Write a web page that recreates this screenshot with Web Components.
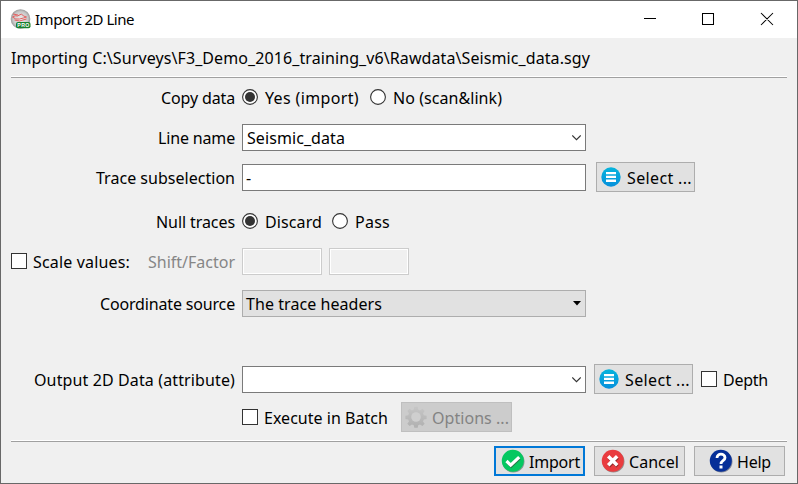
<!DOCTYPE html>
<html lang="en"><head><meta charset="utf-8"><title>Import 2D Line</title>
<style>html,body{margin:0;padding:0;overflow:hidden}body{width:798px;height:484px;font:16px/20px "Noto Sans","DejaVu Sans",sans-serif;color:#000}</style></head><body>
<import-dialog></import-dialog>
<script>
const define=(name,html,init)=>customElements.define(name,class extends HTMLElement{
 connectedCallback(){ if(this.shadowRoot)return; const r=this.attachShadow({mode:'open'});
  r.innerHTML=typeof html==='function'?html(this):html; if(init)init(this,r);}
});
/* Text run whose tracking is adjusted to a given width */
define('fit-text',e=>`<style>:host{display:inline-block;flex:none;white-space:nowrap;width:${e.getAttribute('w')}px}span{display:inline-block;white-space:pre}</style><span></span>`,(e,r)=>{
 const s=r.querySelector('span'),t=e.getAttribute('text'),w=+e.getAttribute('w');s.textContent=t;
 const n=s.getBoundingClientRect().width; if(n&&t.length>1)s.style.letterSpacing=((w-n)/t.length)+'px';
});
const icons={
list:`<svg width="20" height="20" viewBox="0 0 20 20"><defs><linearGradient id="b" x2="0" y2="1"><stop stop-color="#06b4dc"/><stop offset="1" stop-color="#0790dc"/></linearGradient></defs><circle cx="10" cy="10" r="9.7" fill="url(#b)"/><path d="M5 5h10v2.3H5zM5 8.8h10v2.3H5zM5 12.6h10v2.3H5z" fill="#fff"/></svg>`,
gear:`<svg width="22" height="22" viewBox="0 0 22 22"><defs><linearGradient id="m" x2="0" y2="1"><stop stop-color="#c6c6c6"/><stop offset="1" stop-color="#b0b0b0"/></linearGradient></defs><path fill="url(#m)" d="M9.3 0.8h3.4l.5 2.8 1.8.8 2.4-1.7 2.3 2.3L18 7.300l.8 1.900 2.800.5v3.300l-2.800.5-.8 1.900 1.700 2.300-2.300 2.300-2.400-1.600-1.800.8-.5 2.500H9.300l-.5-2.500-1.800-.8-2.400 1.600-2.300-2.300L4 15.400l-.8-1.900-2.800-.5V9.700l2.800-.5.8-1.900L2.300 5l2.300-2.300L7 4.400l1.800-.8z"/><circle cx="11" cy="11" r="4.800" fill="#cfcfcf"/></svg>`,
check:`<svg width="24" height="24" viewBox="0 0 24 24"><circle cx="12.4" cy="12.5" r="11.1" fill="#557565" opacity=".65"/><circle cx="11.8" cy="11.7" r="11" fill="#05c860"/><path d="m6 12.8 4.2 4.2 8.4-8" fill="none" stroke="#247848" stroke-width="3.2"/><path d="m5.5 12 4.2 4.1 8.5-8" fill="none" stroke="#fff" stroke-width="3.2"/></svg>`,
cross:`<svg width="24" height="24" viewBox="0 0 24 24"><circle cx="12.4" cy="12.5" r="11.1" fill="#706060" opacity=".65"/><circle cx="11.8" cy="11.7" r="11" fill="#e93c3f"/><path d="m7.8 8.4 8.8 8.8m0-8.8-8.8 8.8" stroke="#8c2929" stroke-width="3.5"/><path d="m7.2 7.3 9 9m0-9-9 9" stroke="#fff" stroke-width="3.5"/></svg>`,
help:`<svg width="24" height="24" viewBox="0 0 24 24"><circle cx="12.4" cy="12.5" r="11.1" fill="#555a70" opacity=".65"/><circle cx="11.8" cy="11.7" r="11" fill="#062f98"/><path d="M8 9C8 3.8 16 4.2 16 8.7c0 3-4 3-4 6.2" fill="none" stroke="#fff" stroke-width="2.8"/><path d="M10.5 16.5h3v3h-3z" fill="#fff"/></svg>`,
app:`<svg width="21" height="21" viewBox="0 0 21 21"><defs><radialGradient id="a"><stop stop-color="#eee"/><stop offset=".75" stop-color="#c9c9c9"/><stop offset="1" stop-color="#999"/></radialGradient></defs><circle cx="10.500" cy="10" r="9.8" fill="url(#a)"/><path d="M2.5 8q3-2 5-1l4-2 2 2 3 1-3 1-4 1q-4 1-7-2m2 3 5 1 7-2M3 5l5 1" stroke="#e46262" fill="none"/><rect x="6" y="13" width="14.5" height="6.3" rx="2" fill="#18802f"/><text x="7.3" y="18" fill="#fff" font-family="Liberation Sans" font-size="5.2" font-weight="bold" textLength="12">PRO</text></svg>`
};
define('ui-icon',e=>`<style>:host{display:block;flex:none}svg{display:block}</style>${icons[e.getAttribute('name')]}`);
define('push-button',`<style>:host{display:flex;box-sizing:border-box;height:30px;border:1px solid #adadad;background:#e1e1e1;align-items:center;flex:none}:host([primary]){border:2px solid #0078d7}:host([disabled]){background:#ccc;border-color:#bfbfbf;color:#838383}</style><slot></slot>`);
define('radio-mark',e=>`<style>:host{display:block;flex:none;width:16px;height:16px}svg{display:block}</style><svg width="16" height="16"><circle cx="8" cy="8" r="7.4" fill="#fff" stroke="#333" stroke-width="1.1"/>${e.hasAttribute('on')?'<circle cx="8" cy="8" r="5" fill="#333"/>':''}</svg>`);
define('check-box',`<style>:host{display:block;flex:none;box-sizing:border-box;width:16px;height:16px;border:1px solid #333;background:#fff}</style>`);
define('text-box',e=>`<style>:host{display:flex;align-items:center;flex:none;box-sizing:border-box;height:27px;width:344px;border:1px solid #7a7a7a;background:#fff;padding:0 4px;justify-content:space-between}:host([disabled]){width:80px;border-color:#ccc;background:#f0f0f0;box-shadow:inset 0 0 0 1px #fff}:host([select]){background:#e1e1e1;border-color:#adadad}svg{display:block;flex:none;margin-left:auto}</style><slot></slot>${e.hasAttribute('combo')?'<svg width="9" height="6"><path d="m.3.5 4.2 4.2L8.7.5" fill="none" stroke="#333" stroke-width="1.1"/></svg>':e.hasAttribute('select')?'<svg width="8" height="5"><path d="M0 0h8L4 4.5z"/></svg>':''}`);
define('form-row',e=>`<style>:host{display:flex;align-items:center;box-sizing:border-box;height:${e.getAttribute('h')}px;padding-left:11px}.l{display:flex;width:224px;flex:none;align-items:center;justify-content:flex-end;margin-right:7px}::slotted([slot=label]){flex:none}</style><div class="l"><slot name="label"></slot></div><slot></slot>`);
define('title-bar',`<style>:host{display:flex;height:37px;background:#fff;align-items:center;padding-left:9px;box-sizing:border-box;font-size:15px}svg{margin-left:auto;display:block}ui-icon{margin-bottom:1px}fit-text{margin:0 0 1px 4px}</style><ui-icon name="app"></ui-icon><fit-text text="Import 2D Line" w="99"></fit-text><svg width="153" height="37"><path d="M0 17.5h12M58.5 12.5h11v11h-11zM117 12l12 12m0-12-12 12" fill="none" stroke="#000" stroke-width="1.05"/></svg>`);
define('rule-line',`<style>:host{display:block;margin:0 10px;height:1px;background:#a0a0a0;border-top:1px solid #fff}</style>`);
define('import-dialog',`<style>
:host{display:block;box-sizing:border-box;width:798px;height:484px;background:#f0f0f0;border:1px solid #686868}
.path{display:flex;height:38px;align-items:center;padding-left:10px}.foot{display:flex;justify-content:flex-end;gap:9px;padding:4px 12px 0 0}
form-row{margin-left:-1px}push-button ui-icon{margin-left:var(--x,5px)}check-box{margin-bottom:1px}fit-text{margin-top:1px}
</style>
<title-bar></title-bar><div class="path"><fit-text text="Importing C:\\Surveys\\F3_Demo_2016_training_v6\\Rawdata\\Seismic_data.sgy" w="579"></fit-text></div><rule-line></rule-line>
<form-row h="38"><fit-text slot="label" text="Copy data" w="74"></fit-text><radio-mark on></radio-mark><fit-text style="margin-left:7px" text="Yes (import)" w="94"></fit-text><radio-mark style="margin-left:11px"></radio-mark><fit-text style="margin-left:7px" text="No (scan&amp;link)" w="109"></fit-text></form-row>
<form-row h="43"><fit-text slot="label" text="Line name" w="77"></fit-text><text-box combo><fit-text text="Seismic_data" w="98"></fit-text></text-box></form-row>
<form-row h="37"><fit-text slot="label" text="Trace subselection" w="139"></fit-text><text-box><fit-text style="margin-left:-1px" text="-" w="6"></fit-text></text-box><push-button style="width:99px;margin:0 0 1px 10px;--x:4px"><ui-icon name="list"></ui-icon><fit-text style="margin-left:6px" text="Select ..." w="65"></fit-text></push-button></form-row>
<form-row h="50"><fit-text slot="label" text="Null traces" w="79"></fit-text><radio-mark on></radio-mark><fit-text style="margin-left:7px" text="Discard" w="57"></fit-text><radio-mark style="margin-left:10px"></radio-mark><fit-text style="margin-left:7px" text="Pass" w="35"></fit-text></form-row>
<form-row h="31"><check-box slot="label"></check-box><fit-text slot="label" style="margin:0 18px 0 6px" text="Scale values:" w="97"></fit-text><fit-text slot="label" style="color:#868686" text="Shift/Factor" w="87"></fit-text><text-box disabled></text-box><text-box disabled style="margin-left:7px"></text-box></form-row>
<form-row h="53"><fit-text slot="label" text="Coordinate source" w="135"></fit-text><text-box select><fit-text style="margin-left:-1px" text="The trace headers" w="136"></fit-text></text-box></form-row>
<form-row h="65" style="padding-top:34px"><fit-text slot="label" text="Output 2D Data (attribute)" w="201"></fit-text><text-box combo></text-box><push-button style="width:99px;margin:0 0 1px 8px;--x:4px"><ui-icon name="list"></ui-icon><fit-text style="margin-left:6px" text="Select ..." w="65"></fit-text></push-button><check-box style="margin-left:8px"></check-box><fit-text style="margin-left:6px" text="Depth" w="45"></fit-text></form-row>
<form-row h="44" style="margin-bottom:1px"><check-box style="margin-bottom:0"></check-box><fit-text style="margin-left:6px" text="Execute in Batch" w="124"></fit-text><push-button disabled style="width:111px;margin-left:13px;--x:3px"><ui-icon name="gear"></ui-icon><fit-text style="margin-left:5px" text="Options ..." w="77"></fit-text></push-button></form-row>
<rule-line></rule-line><div class="foot"><push-button primary style="width:91px"><ui-icon name="check"></ui-icon><fit-text style="margin-left:4px" text="Import" w="51"></fit-text></push-button><push-button style="width:91px;--x:6px"><ui-icon name="cross"></ui-icon><fit-text style="margin-left:4px" text="Cancel" w="50"></fit-text></push-button><push-button style="width:91px;--x:14px"><ui-icon name="help"></ui-icon><fit-text style="margin-left:4px" text="Help" w="34"></fit-text></push-button></div>`);
</script></body></html>
